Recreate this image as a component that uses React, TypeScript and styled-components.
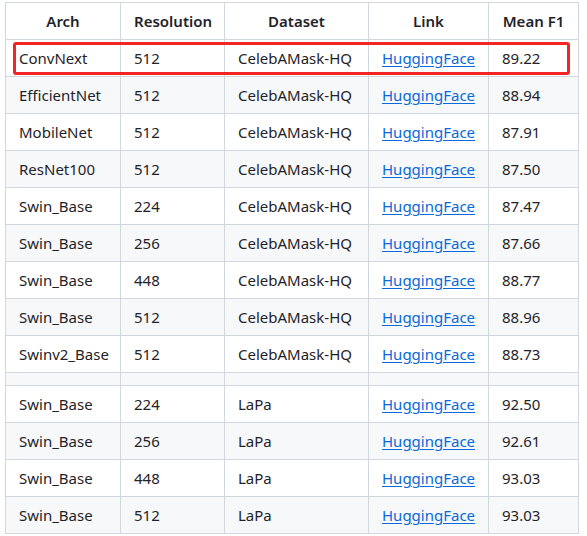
import React from "react";
import styled, { createGlobalStyle } from "styled-components";

const Global = createGlobalStyle`
  html, body { margin: 0; padding: 0; background: #ffffff; }
  body { font-family: "Noto Sans", "Segoe UI", sans-serif; color: #1f2328; }
`;

const Page = styled.div`
  padding: 2px 0 0 5px;
`;

const Wrap = styled.div`
  position: relative;
  width: 573px;
`;

const Table = styled.table`
  border-collapse: collapse;
  border-spacing: 0;
  table-layout: fixed;
  width: 573px;
  font-size: 15px;
  line-height: 24px;
`;

const Row = styled.tr<{ $striped?: boolean }>`
  background: ${(p) => (p.$striped ? "#f6f8fa" : "#ffffff")};
  border-top: 1px solid #d0d7de;
`;

const Th = styled.th`
  border: 1px solid #d0d7de;
  padding: 6px 13px;
  font-weight: 600;
  text-align: center;
`;

const Td = styled.td`
  border: 1px solid #d0d7de;
  padding: 6px 13px;
  text-align: left;
  white-space: nowrap;
`;

const Link = styled.a`
  color: #0969da;
  text-decoration: underline;
  text-underline-offset: 2px;
`;

const Highlight = styled.div`
  position: absolute;
  left: 8px;
  top: 40px;
  width: 557px;
  height: 33px;
  border: 3px solid #f32424;
  border-radius: 3px;
  box-sizing: border-box;
  pointer-events: none;
`;

type R = [string, string, string, string] | null;

const rows: R[] = [
  ["ConvNext", "512", "CelebAMask-HQ", "89.22"],
  ["EfficientNet", "512", "CelebAMask-HQ", "88.94"],
  ["MobileNet", "512", "CelebAMask-HQ", "87.91"],
  ["ResNet100", "512", "CelebAMask-HQ", "87.50"],
  ["Swin_Base", "224", "CelebAMask-HQ", "87.47"],
  ["Swin_Base", "256", "CelebAMask-HQ", "87.66"],
  ["Swin_Base", "448", "CelebAMask-HQ", "88.77"],
  ["Swin_Base", "512", "CelebAMask-HQ", "88.96"],
  ["Swinv2_Base", "512", "CelebAMask-HQ", "88.73"],
  null,
  ["Swin_Base", "224", "LaPa", "92.50"],
  ["Swin_Base", "256", "LaPa", "92.61"],
  ["Swin_Base", "448", "LaPa", "93.03"],
  ["Swin_Base", "512", "LaPa", "93.03"],
];

export default function App() {
  return (
    <Page>
      <Global />
      <Wrap>
        <Table>
          <colgroup>
            <col style={{ width: 115 }} />
            <col style={{ width: 104 }} />
            <col style={{ width: 144 }} />
            <col style={{ width: 120 }} />
            <col style={{ width: 90 }} />
          </colgroup>
          <thead>
            <Row>
              <Th>Arch</Th>
              <Th>Resolution</Th>
              <Th>Dataset</Th>
              <Th>Link</Th>
              <Th>Mean F1</Th>
            </Row>
          </thead>
          <tbody>
            {rows.map((r, i) => (
              <Row key={i} $striped={i % 2 === 1}>
                {r ? (
                  <>
                    <Td>{r[0]}</Td>
                    <Td>{r[1]}</Td>
                    <Td>{r[2]}</Td>
                    <Td>
                      <Link href="#">HuggingFace</Link>
                    </Td>
                    <Td>{r[3]}</Td>
                  </>
                ) : (
                  <>
                    <Td />
                    <Td />
                    <Td />
                    <Td />
                    <Td />
                  </>
                )}
              </Row>
            ))}
          </tbody>
        </Table>
        <Highlight />
      </Wrap>
    </Page>
  );
}
